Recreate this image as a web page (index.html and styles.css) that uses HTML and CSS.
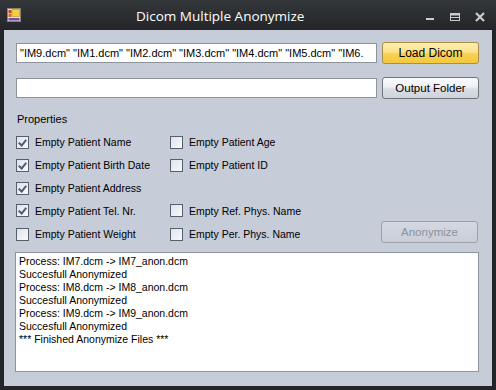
FILE: index.html
```html
<!DOCTYPE html>
<html>
<head>
<meta charset="utf-8">
<link rel="stylesheet" href="styles.css">
</head>
<body>
<div class="window">
  <div class="titlebar">
    <svg class="appicon" width="14" height="14" viewBox="0 0 14 14">
      <rect x="0.5" y="0.5" width="13" height="13" fill="#e8e4d8" stroke="#8a8270"/>
      <rect x="5" y="1.5" width="7.5" height="7" fill="#f4d040" stroke="#c09020" stroke-width="0.6"/>
      <rect x="1.5" y="2" width="3" height="3" fill="#c84020"/>
      <rect x="1.5" y="5.5" width="3" height="3.5" fill="#d07030"/>
      <rect x="1.5" y="10" width="11" height="2.5" fill="#7050a0"/>
    </svg>
    <div class="title">Dicom Multiple Anonymize</div>
    <div class="wbtns">
      <svg width="14" height="14" viewBox="0 0 14 14"><rect x="3" y="8" width="8" height="2" fill="#c9cbcd"/></svg>
      <svg width="14" height="14" viewBox="0 0 14 14"><rect x="2.5" y="3.5" width="9" height="7" fill="none" stroke="#c9cbcd"/><rect x="2.5" y="3.5" width="9" height="2" fill="#c9cbcd"/><rect x="3" y="7" width="8" height="1" fill="#c9cbcd"/></svg>
      <svg width="14" height="14" viewBox="0 0 14 14"><path d="M3 3 L11 11 M11 3 L3 11" stroke="#c9cbcd" stroke-width="2.2"/></svg>
    </div>
  </div>
  <div class="content">
    <div class="row first">
      <div class="textbox">"IM9.dcm" "IM1.dcm" "IM2.dcm" "IM3.dcm" "IM4.dcm" "IM5.dcm" "IM6.</div>
      <div class="btn yellow">Load Dicom</div>
    </div>
    <div class="row second">
      <div class="textbox"></div>
      <div class="btn">Output Folder</div>
    </div>
    <div class="label">Properties</div>
    <div class="grid">
      <label class="cb"><span class="box checked"></span>Empty Patient Name</label>
      <label class="cb"><span class="box"></span>Empty Patient Age</label>
      <span></span>
      <label class="cb"><span class="box checked"></span>Empty Patient Birth Date</label>
      <label class="cb"><span class="box"></span>Empty Patient ID</label>
      <span></span>
      <label class="cb"><span class="box checked"></span>Empty Patient Address</label>
      <span></span>
      <span></span>
      <label class="cb"><span class="box checked"></span>Empty Patient Tel. Nr.</label>
      <label class="cb"><span class="box"></span>Empty Ref. Phys. Name</label>
      <span></span>
      <label class="cb"><span class="box"></span>Empty Patient Weight</label>
      <label class="cb"><span class="box"></span>Empty Per. Phys. Name</label>
      <div class="btn disabled">Anonymize</div>
    </div>
    <div class="log">
      <div>Process: IM7.dcm -&gt; IM7_anon.dcm</div>
      <div>Succesfull Anonymized</div>
      <div>Process: IM8.dcm -&gt; IM8_anon.dcm</div>
      <div>Succesfull Anonymized</div>
      <div>Process: IM9.dcm -&gt; IM9_anon.dcm</div>
      <div>Succesfull Anonymized</div>
      <div>*** Finished Anonymize Files ***</div>
    </div>
  </div>
</div>
</body>
</html>
```

FILE: styles.css
```css
html, body {
  margin: 0;
  padding: 0;
  background: #2a2d30;
}
.window {
  width: 496px;
  height: 390px;
  background: linear-gradient(#34373a, #232528 30px, #232528);
  display: flex;
  flex-direction: column;
  font-family: "Liberation Sans", Arial, sans-serif;
  font-size: 10.5px;
  color: #000;
}
.titlebar {
  height: 30px;
  display: flex;
  align-items: center;
  padding: 0 0 0 7px;
  box-sizing: border-box;
}
.appicon {
  flex: none;
}
.title {
  flex: 1;
  padding-left: 115px;
  font-family: "Open Sans", "DejaVu Sans", sans-serif;
  font-size: 13.5px;
  color: #ffffff;
  padding-top: 2px;
}
.wbtns {
  display: flex;
  gap: 11px;
  padding-right: 9px;
  padding-top: 4px;
}
.content {
  flex: 1;
  margin: 0 4px 4px 4px;
  background: #c6ccd8;
  padding: 0 13px 0 12px;
  display: flex;
  flex-direction: column;
}
.row {
  display: flex;
  align-items: center;
  justify-content: space-between;
  height: 22px;
}
.row.first {
  margin-top: 12px;
}
.row.second {
  margin-top: 13px;
}
.textbox {
  width: 356px;
  height: 18px;
  background: #fff;
  border: 1px solid #8e949d;
  box-sizing: content-box;
  padding: 0 0 0 3px;
  line-height: 18px;
  white-space: nowrap;
  overflow: hidden;
  font-size: 11px;
}
.btn {
  width: 95px;
  height: 20px;
  border: 1px solid #6f747c;
  border-radius: 3px;
  background: linear-gradient(#fbfbfc, #eef0f3 45%, #d9dde4 55%, #cfd4dc);
  display: flex;
  align-items: center;
  justify-content: center;
  font-size: 11.5px;
  box-sizing: content-box;
}
.btn.yellow {
  background: linear-gradient(#fdedb0, #fce28a 45%, #f7cf52 55%, #f5c93e);
  border-color: #a98d48;
  font-size: 12px;
}
.btn.disabled {
  color: #8c929c;
  background: linear-gradient(#d3d8e1, #c9ced8);
  border-color: #9ba1ab;
  align-self: end;
  margin-bottom: 3px;
}
.label {
  margin-top: 13px;
  height: 14px;
  line-height: 14px;
  padding-left: 1px;
  font-size: 11px;
}
.grid {
  margin-top: 5px;
  display: grid;
  grid-template-columns: 154px 211px 97px;
  grid-template-rows: 22px 24px 22px 23px 24px;
}
.cb {
  display: flex;
  align-items: center;
  gap: 6px;
  white-space: nowrap;
}
.box {
  width: 11px;
  height: 11px;
  border: 1px solid #56606c;
  background: linear-gradient(135deg, #dfe3ea, #f8f9fb);
  position: relative;
  flex: none;
}
.box.checked::after {
  content: "";
  position: absolute;
  left: 3px;
  top: 1px;
  width: 3px;
  height: 6px;
  border: solid #4d5d73;
  border-width: 0 2px 2px 0;
  transform: rotate(40deg);
}
.log {
  margin: 6px 0 0 -1px;
  height: 114px;
  background: #fff;
  border: 1px solid #8e949d;
  padding: 2px 3px;
  line-height: 13px;
  font-size: 10.5px;
}
```
